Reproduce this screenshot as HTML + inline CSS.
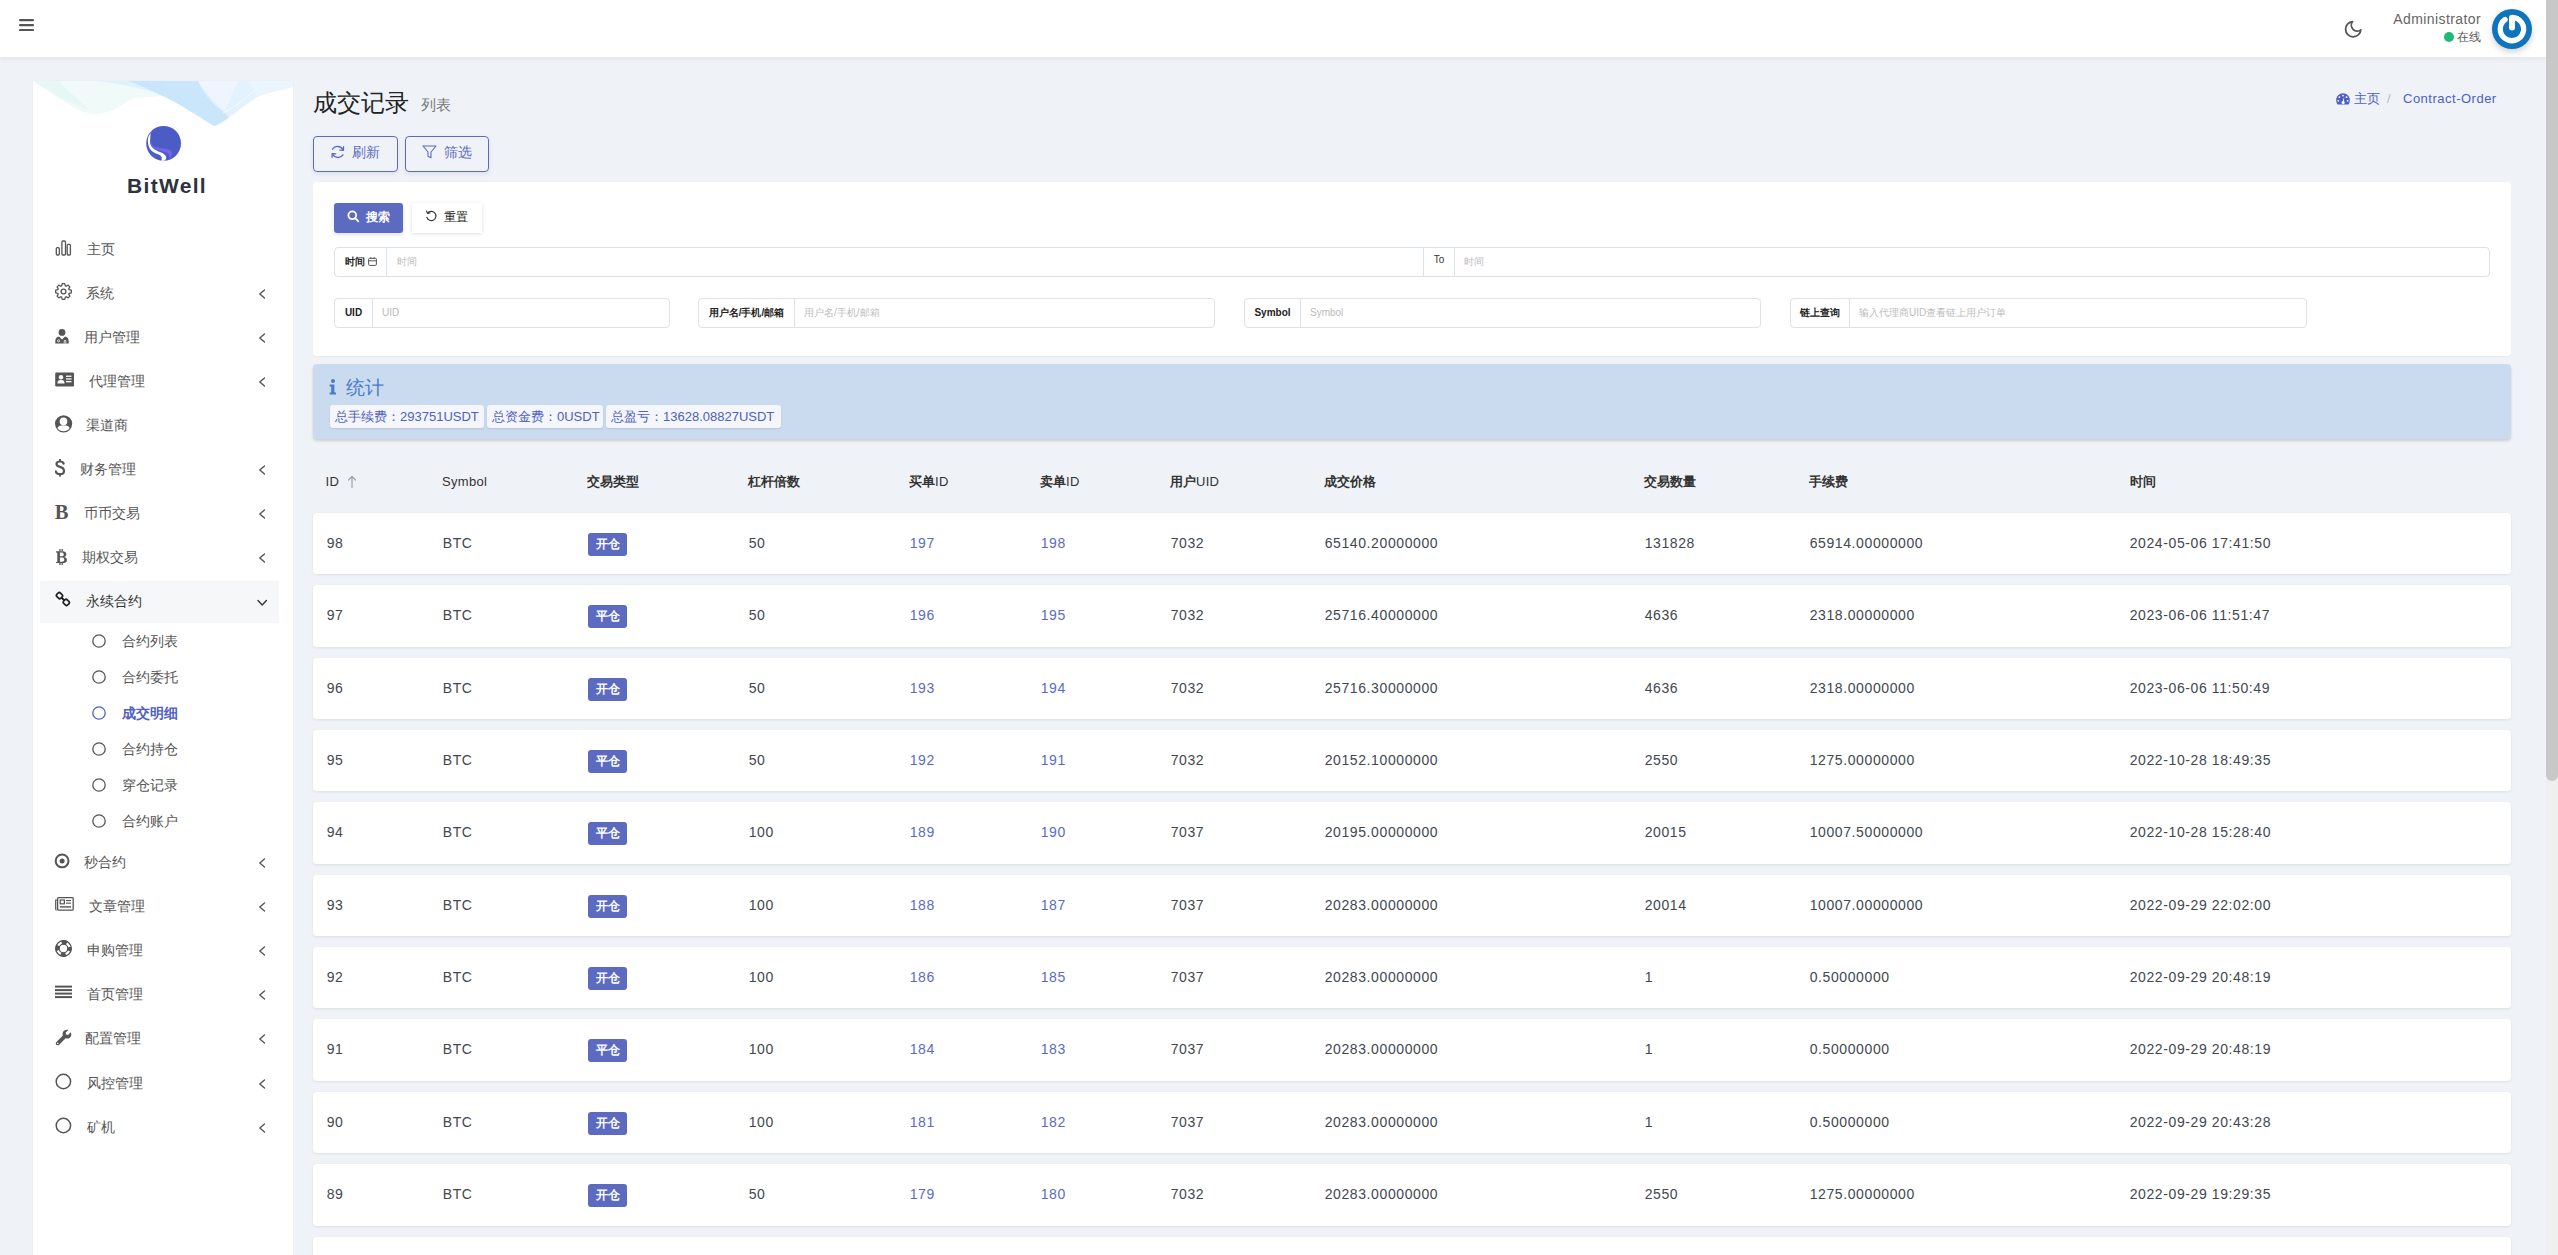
<!DOCTYPE html>
<html><head><meta charset="utf-8">
<style>
*{box-sizing:border-box}
html,body{margin:0;padding:0}
body{width:2558px;height:1255px;overflow:hidden;background:#eff2f7;font-family:"Liberation Sans",sans-serif;color:#414750;position:relative}
.a{position:absolute}
#hdr{left:0;top:0;width:2546px;height:57px;background:#fff;box-shadow:0 2px 5px rgba(0,0,0,.06)}
#sb-track{right:0;top:0;width:12px;height:1255px;background:#efefef}
#sb-thumb{right:0;top:0;width:12px;height:781px;background:#c8c8c8;border-radius:0 0 6px 6px}
#side{left:33px;top:81px;width:260px;height:1200px;background:#fff;box-shadow:0 0 3px rgba(0,0,0,.03)}
.mi{position:absolute;left:0;width:260px;height:20px;font-size:14px;line-height:20px;color:#4f4f4f}
.mi .t{position:absolute;top:0;white-space:nowrap}
.mi svg{position:absolute}
.mt{font-size:14px;line-height:20px;color:#555;white-space:nowrap}
.card{background:#fff;border-radius:4px}
.btn-o{border:1px solid #5c6bc0;border-radius:4px;color:#5c6bc0;font-size:14px;box-shadow:0 2px 4px rgba(0,0,0,.08)}
.ig{position:absolute;height:30px;border:1px solid #dce3e8;border-radius:4px;background:#fff}
.ig .lb{position:absolute;left:0;top:0;height:28px;border-right:1px solid #dce3e8;font-size:10px;font-weight:bold;color:#222;line-height:28px;text-align:center}
.ig .ph{position:absolute;top:0;height:28px;line-height:28px;font-size:10px;color:#bbb;white-space:nowrap}
.row{position:absolute;left:313px;width:2198px;height:61.4px;background:#fff;border-radius:4px;box-shadow:0 1px 3px rgba(0,0,0,.08)}
.row .c{position:absolute;top:20px;margin-left:.7px;line-height:21px;font-size:14px;letter-spacing:.6px;white-space:nowrap;color:#414750}
.row .lk{color:#5c6bc0}
.lbl{position:absolute;left:275px;top:20px;width:39px;height:23px;background:#5c6bc0;border-radius:3px;color:#fff;font-size:12px;font-weight:bold;text-align:center;line-height:23px}
.th{position:absolute;top:472px;line-height:20px;font-size:13px;color:#333;white-space:nowrap;letter-spacing:.3px}.th b{font-weight:bold;letter-spacing:0}
</style></head><body>
<div id="hdr" class="a">
 <svg class="a" style="left:19px;top:18px" width="15" height="13" viewBox="0 0 15 13"><rect x="0" y="1" width="15" height="2.2" rx="1" fill="#555"/><rect x="0" y="6" width="15" height="2.2" rx="1" fill="#555"/><rect x="0" y="11" width="15" height="2.2" rx="1" fill="#555"/></svg>
 <svg class="a" style="left:2343.1px;top:19.3px" width="20.4" height="20.4" viewBox="0 0 24 24"><path d="M21 12.79A9 9 0 1 1 11.21 3 7 7 0 0 0 21 12.79z" fill="none" stroke="#555" stroke-width="2.1" stroke-linecap="round" stroke-linejoin="round"/></svg>
 <div class="a" style="left:2393px;top:10px;width:88px;text-align:right;font-size:14px;line-height:18px;color:#666;letter-spacing:.4px;white-space:nowrap">Administrator</div>
 <div class="a" style="left:2444px;top:32px;width:10px;height:10px;border-radius:50%;background:#21b978"></div>
 <div class="a" style="left:2457px;top:29px;font-size:12px;line-height:16px;color:#555">在线</div>
 <div class="a" style="left:2492px;top:9px;width:40px;height:40px;border-radius:50%;background:#0e74bb;box-shadow:0 3px 6px rgba(0,0,0,.18)">
  <svg width="40" height="40" viewBox="0 0 40 40"><path d="M20 8.3 A11.7 11.7 0 1 1 13.1 10.5" fill="none" stroke="#fff" stroke-width="5.3" stroke-linecap="round"/><line x1="20" y1="9" x2="20" y2="18.5" stroke="#fff" stroke-width="6" stroke-linecap="round"/></svg>
 </div>
</div>
<div id="side" class="a"></div>
<svg class="a" style="left:33px;top:81px" width="260" height="50" viewBox="0 0 260 50">
<path d="M0 0 C20 14 40 28 56 32.6 C66 34 74 31.5 80 29 C90 24 96 19 102 17 L130 15 L130 0Z" fill="#e3f6f3" fill-opacity=".55"/>
<path d="M0 0 C15 9 35 22 56 29 C50 22 35 10 25 0Z" fill="#d8f3ee" fill-opacity=".35"/>
<path d="M65 0 L260 0 L260 6 C245 9 235 12 224 16 C205 28 195 40 181 45 C165 35 145 22 130 15 C115 8 90 3 65 0Z" fill="#dcefff" fill-opacity=".8"/>
<path d="M95 0 L165 0 C172 12 185 26 196 36 C190 41 185 44 181 45 C165 35 145 22 130 15 C118 9 105 3 95 0Z" fill="#b9def8" fill-opacity=".6"/>
<path d="M165 0 L205 0 C200 12 195 25 190 30 C180 25 170 12 165 0Z" fill="#ffffff" fill-opacity=".35"/>
<path d="M190 32 C205 25 215 15 224 7" fill="none" stroke="#fff" stroke-width="1" stroke-opacity=".7"/>
<path d="M224 16 C235 12 245 9 260 6 L260 0 L215 0Z" fill="#eef7fd" fill-opacity=".6"/>
</svg>
<svg class="a" style="left:145px;top:125px" width="38" height="38" viewBox="0 0 38 38">
<defs><clipPath id="lc"><circle cx="18.6" cy="18.4" r="17.4"/></clipPath></defs>
<circle cx="18.6" cy="18.4" r="17.4" fill="#4b5dc4"/>
<g clip-path="url(#lc)"><path d="M6.37 7.03 C5.98 7.70 3.91 10.21 3.35 12.05 C2.80 13.90 2.80 16.18 3.02 18.08 C3.24 19.98 3.69 21.87 4.69 23.43 C5.70 25.00 7.48 26.39 9.04 27.45 C10.60 28.51 12.84 29.07 14.06 29.79 C15.29 30.52 15.96 31.08 16.41 31.80 C16.85 32.53 16.80 33.45 16.74 34.14 C16.68 34.84 15.62 35.71 16.07 35.98 C16.52 36.26 18.58 36.29 19.42 35.82 C20.25 35.34 20.92 34.03 21.09 33.14 C21.26 32.25 21.04 31.30 20.42 30.46 C19.81 29.63 18.80 28.90 17.41 28.12 C16.02 27.34 13.73 26.72 12.05 25.78 C10.38 24.83 8.51 23.71 7.37 22.43 C6.23 21.15 5.47 20.48 5.19 18.08 C4.92 15.68 5.50 9.88 5.70 8.04 C5.89 6.20 6.76 6.37 6.37 7.03Z" fill="#fff"/><path d="M5.70 16.74 C5.92 16.68 6.81 19.75 8.04 20.76 C9.27 21.76 11.11 22.26 13.06 22.76 C15.01 23.27 17.80 23.43 19.75 23.77 C21.70 24.10 23.60 24.16 24.77 24.77 C25.94 25.39 26.45 26.56 26.78 27.45 C27.12 28.34 27.00 29.29 26.78 30.13 C26.56 30.96 25.89 31.91 25.44 32.47 C25.00 33.03 24.27 33.75 24.10 33.47 C23.94 33.20 24.77 31.69 24.44 30.80 C24.10 29.90 23.15 28.84 22.10 28.12 C21.04 27.39 19.75 27.06 18.08 26.45 C16.41 25.83 13.95 25.33 12.05 24.44 C10.16 23.55 7.76 22.37 6.70 21.09 C5.64 19.81 5.47 16.80 5.70 16.74Z" fill="#7563ee"/></g>
</svg>
<div class="a" style="left:117px;top:174px;width:100px;text-align:center;font-size:21px;font-weight:bold;line-height:24px;color:#2b3240;letter-spacing:1.3px">BitWell</div>
<svg class="a" style="left:55px;top:240px" width="17" height="16" viewBox="0 0 17 16"><rect x="1.3" y="7.6" width="3" height="7.4" rx="1" fill="none" stroke="#555" stroke-width="1.3"/><rect x="6.9" y="1" width="3.6" height="14" rx="1" fill="none" stroke="#555" stroke-width="1.3"/><rect x="12.2" y="4.3" width="3.2" height="10.7" rx="1" fill="none" stroke="#555" stroke-width="1.3"/></svg>
<div class="a mt" style="left:87px;top:239px;">主页</div>
<svg class="a" style="left:55px;top:283px" width="17" height="17" viewBox="0 0 17 17"><path d="M6.70 2.88 L7.24 0.70 L9.76 0.70 L10.30 2.88 L11.20 3.25 L13.12 2.10 L14.90 3.88 L13.75 5.80 L14.12 6.70 L16.30 7.24 L16.30 9.76 L14.12 10.30 L13.75 11.20 L14.90 13.12 L13.12 14.90 L11.20 13.75 L10.30 14.12 L9.76 16.30 L7.24 16.30 L6.70 14.12 L5.80 13.75 L3.88 14.90 L2.10 13.12 L3.25 11.20 L2.88 10.30 L0.70 9.76 L0.70 7.24 L2.88 6.70 L3.25 5.80 L2.10 3.88 L3.88 2.10 L5.80 3.25Z" fill="none" stroke="#555" stroke-width="1.3" stroke-linejoin="round"/><circle cx="8.5" cy="8.5" r="2.4" fill="none" stroke="#555" stroke-width="1.3"/></svg>
<div class="a mt" style="left:86px;top:283px;">系统</div>
<svg class="a" style="left:258px;top:289px" width="8" height="10" viewBox="0 0 8 10"><polyline points="6.5,1 1.8,5 6.5,9" fill="none" stroke="#555" stroke-width="1.4" stroke-linejoin="round" stroke-linecap="round"/></svg>
<svg class="a" style="left:55px;top:329px" width="14" height="15" viewBox="0 0 14 15"><circle cx="7" cy="3.4" r="3.4" fill="#555"/><path d="M0.3 14.5 L0.3 12 C0.3 9.3 2 8 4 7.6 L7 10.5 L10 7.6 C12 8 13.7 9.3 13.7 12 L13.7 14.5Z" fill="#555"/><circle cx="3.6" cy="11.8" r="1.1" fill="none" stroke="#fff" stroke-width=".8"/><path d="M9.2 14.5 V11.5 H10.8 V14.5" fill="none" stroke="#fff" stroke-width=".8"/></svg>
<div class="a mt" style="left:83.5px;top:327px;">用户管理</div>
<svg class="a" style="left:258px;top:333px" width="8" height="10" viewBox="0 0 8 10"><polyline points="6.5,1 1.8,5 6.5,9" fill="none" stroke="#555" stroke-width="1.4" stroke-linejoin="round" stroke-linecap="round"/></svg>
<svg class="a" style="left:55px;top:372px" width="19" height="15" viewBox="0 0 19 15"><rect x="0.2" y="0.4" width="18.8" height="14.2" rx="1.3" fill="#555"/><circle cx="6" cy="5.2" r="2.2" fill="#fff"/><path d="M2.5 11.5 C2.5 8.5 4 8 6 8 C8 8 9.5 8.5 9.5 11.5Z" fill="#fff"/><rect x="11" y="3.6" width="5.5" height="1.3" fill="#fff"/><rect x="11" y="6.3" width="5.5" height="1.3" fill="#fff"/><rect x="11" y="9" width="5.5" height="1.3" fill="#fff"/></svg>
<div class="a mt" style="left:89px;top:371px;">代理管理</div>
<svg class="a" style="left:258px;top:377px" width="8" height="10" viewBox="0 0 8 10"><polyline points="6.5,1 1.8,5 6.5,9" fill="none" stroke="#555" stroke-width="1.4" stroke-linejoin="round" stroke-linecap="round"/></svg>
<svg class="a" style="left:55px;top:415px" width="18" height="18" viewBox="0 0 18 18"><circle cx="8.6" cy="8.8" r="8.6" fill="#555"/><circle cx="8.5" cy="6.4" r="3.8" fill="#fff"/><path d="M2.3 13 C3.2 10.9 5.5 10.3 8.5 10.3 C11.5 10.3 13.8 10.9 14.7 13 C13.3 15.2 11 16.3 8.5 16.3 C6 16.3 3.7 15.2 2.3 13Z" fill="#fff"/></svg>
<div class="a mt" style="left:86.4px;top:415px;">渠道商</div>
<svg class="a" style="left:55px;top:459px" width="10" height="18" viewBox="0 0 10 18"><path d="M8.6 4.6 C8.2 3.3 7 2.5 5 2.5 C2.8 2.5 1.5 3.5 1.5 5 C1.5 6.6 2.8 7.3 5 7.9 C7.5 8.6 9 9.6 9 11.9 C9 13.9 7.3 15.2 5 15.2 C2.6 15.2 1.1 14.1 0.8 12.4" fill="none" stroke="#555" stroke-width="2.2" stroke-linecap="round"/><rect x="4.1" y="0" width="1.8" height="3" fill="#555"/><rect x="4.1" y="14.6" width="1.8" height="3" fill="#555"/></svg>
<div class="a mt" style="left:80px;top:459px;">财务管理</div>
<svg class="a" style="left:258px;top:465px" width="8" height="10" viewBox="0 0 8 10"><polyline points="6.5,1 1.8,5 6.5,9" fill="none" stroke="#555" stroke-width="1.4" stroke-linejoin="round" stroke-linecap="round"/></svg>
<div class="a" style="left:54.7px;top:501px;font-family:'Liberation Serif',serif;font-size:20.5px;font-weight:bold;line-height:22px;color:#555">B</div>
<div class="a mt" style="left:83.5px;top:503px;">币币交易</div>
<svg class="a" style="left:258px;top:509px" width="8" height="10" viewBox="0 0 8 10"><polyline points="6.5,1 1.8,5 6.5,9" fill="none" stroke="#555" stroke-width="1.4" stroke-linejoin="round" stroke-linecap="round"/></svg>
<svg class="a" style="left:55px;top:549px" width="13" height="16" viewBox="0 0 13 16"><path d="M1 2.3 H7.3 C10 2.3 11.3 3.5 11.3 5.4 C11.3 6.7 10.5 7.5 9.3 7.9 C10.9 8.3 12 9.3 12 10.9 C12 12.9 10.5 14.1 7.6 14.1 H1 V13 H2.3 V3.4 H1Z M4.9 3.6 V7.3 H6.8 C8.2 7.3 8.7 6.5 8.7 5.4 C8.7 4.3 8.1 3.6 6.8 3.6Z M4.9 8.5 V12.8 H7 C8.7 12.8 9.3 11.9 9.3 10.6 C9.3 9.3 8.6 8.5 7 8.5Z" fill="#555"/><rect x="4.3" y="0" width="1.3" height="2.5" fill="#555"/><rect x="6.6" y="0" width="1.3" height="2.5" fill="#555"/><rect x="4.3" y="13.8" width="1.3" height="2.2" fill="#555"/><rect x="6.6" y="13.8" width="1.3" height="2.2" fill="#555"/></svg>
<div class="a mt" style="left:81.5px;top:547px;">期权交易</div>
<svg class="a" style="left:258px;top:553px" width="8" height="10" viewBox="0 0 8 10"><polyline points="6.5,1 1.8,5 6.5,9" fill="none" stroke="#555" stroke-width="1.4" stroke-linejoin="round" stroke-linecap="round"/></svg>
<div class="a" style="left:40px;top:581px;width:239px;height:42px;background:#f6f7f9"></div>
<svg class="a" style="left:55px;top:591px" width="16" height="16" viewBox="0 0 16 16"><g fill="none" stroke="#222" stroke-width="1.7"><rect x="1.7" y="2.1" width="5.6" height="5" rx="1.7" transform="rotate(45 4.5 4.6)"/><rect x="8.5" y="8.9" width="5.6" height="5" rx="1.7" transform="rotate(45 11.3 11.4)"/><line x1="6.4" y1="6.5" x2="9.4" y2="9.5" stroke-width="2"/></g></svg>
<div class="a mt" style="left:85.5px;top:591px;color:#333">永续合约</div>
<svg class="a" style="left:257px;top:599px" width="11" height="8" viewBox="0 0 11 8"><polyline points="1,1.5 5.2,6 9.4,1.5" fill="none" stroke="#333" stroke-width="1.4" stroke-linejoin="round" stroke-linecap="round"/></svg>
<svg class="a" style="left:92px;top:634px" width="14" height="14" viewBox="0 0 14 14"><circle cx="7" cy="7" r="6.2" fill="none" stroke="#555" stroke-width="1.3"/></svg>
<div class="a mt" style="left:121.5px;top:631px;">合约列表</div>
<svg class="a" style="left:92px;top:670px" width="14" height="14" viewBox="0 0 14 14"><circle cx="7" cy="7" r="6.2" fill="none" stroke="#555" stroke-width="1.3"/></svg>
<div class="a mt" style="left:121.5px;top:667px;">合约委托</div>
<svg class="a" style="left:92px;top:706px" width="14" height="14" viewBox="0 0 14 14"><circle cx="7" cy="7" r="6.2" fill="none" stroke="#5061c4" stroke-width="1.3"/></svg>
<div class="a mt" style="left:121.5px;top:703px;color:#5061c4;font-weight:bold">成交明细</div>
<svg class="a" style="left:92px;top:742px" width="14" height="14" viewBox="0 0 14 14"><circle cx="7" cy="7" r="6.2" fill="none" stroke="#555" stroke-width="1.3"/></svg>
<div class="a mt" style="left:121.5px;top:739px;">合约持仓</div>
<svg class="a" style="left:92px;top:778px" width="14" height="14" viewBox="0 0 14 14"><circle cx="7" cy="7" r="6.2" fill="none" stroke="#555" stroke-width="1.3"/></svg>
<div class="a mt" style="left:121.5px;top:775px;">穿仓记录</div>
<svg class="a" style="left:92px;top:814px" width="14" height="14" viewBox="0 0 14 14"><circle cx="7" cy="7" r="6.2" fill="none" stroke="#555" stroke-width="1.3"/></svg>
<div class="a mt" style="left:121.5px;top:811px;">合约账户</div>
<svg class="a" style="left:54px;top:853px" width="16" height="16" viewBox="0 0 16 16"><circle cx="8.1" cy="7.9" r="6.4" fill="none" stroke="#555" stroke-width="2"/><circle cx="8.1" cy="7.9" r="2.5" fill="#555"/></svg>
<div class="a mt" style="left:83.5px;top:852px;">秒合约</div>
<svg class="a" style="left:258px;top:858px" width="8" height="10" viewBox="0 0 8 10"><polyline points="6.5,1 1.8,5 6.5,9" fill="none" stroke="#555" stroke-width="1.4" stroke-linejoin="round" stroke-linecap="round"/></svg>
<svg class="a" style="left:55px;top:897px" width="19" height="14" viewBox="0 0 19 14"><rect x="2.6" y="0.7" width="15.6" height="12.4" rx="0.8" fill="none" stroke="#555" stroke-width="1.3"/><path d="M2.6 3 H0.7 V12.3 C0.7 12.8 1.2 13.1 1.7 13.1" fill="none" stroke="#555" stroke-width="1.2"/><rect x="5.2" y="3" width="4.2" height="3.8" fill="none" stroke="#555" stroke-width="1.2"/><rect x="11" y="3" width="5" height="1.1" fill="#555"/><rect x="11" y="5.6" width="5" height="1.1" fill="#555"/><rect x="4.8" y="9.2" width="11.2" height="1.4" fill="#555"/></svg>
<div class="a mt" style="left:88.8px;top:896px;">文章管理</div>
<svg class="a" style="left:258px;top:902px" width="8" height="10" viewBox="0 0 8 10"><polyline points="6.5,1 1.8,5 6.5,9" fill="none" stroke="#555" stroke-width="1.4" stroke-linejoin="round" stroke-linecap="round"/></svg>
<svg class="a" style="left:55px;top:940px" width="17" height="17" viewBox="0 0 17 17"><circle cx="8.5" cy="8.5" r="6.2" fill="none" stroke="#555" stroke-width="4" stroke-dasharray="5.2 4.54" stroke-dashoffset="2.6"/><circle cx="8.5" cy="8.5" r="7.8" fill="none" stroke="#555" stroke-width="1.2"/><circle cx="8.5" cy="8.5" r="4.3" fill="none" stroke="#555" stroke-width="1.2"/></svg>
<div class="a mt" style="left:87.3px;top:940px;">申购管理</div>
<svg class="a" style="left:258px;top:946px" width="8" height="10" viewBox="0 0 8 10"><polyline points="6.5,1 1.8,5 6.5,9" fill="none" stroke="#555" stroke-width="1.4" stroke-linejoin="round" stroke-linecap="round"/></svg>
<svg class="a" style="left:55px;top:985px" width="17" height="14" viewBox="0 0 17 14"><rect x="0" y="0.6" width="17" height="2" fill="#555"/><rect x="0" y="4.1" width="17" height="2" fill="#555"/><rect x="0" y="7.6" width="17" height="2" fill="#555"/><rect x="0" y="11.1" width="17" height="2" fill="#555"/></svg>
<div class="a mt" style="left:86.7px;top:984px;">首页管理</div>
<svg class="a" style="left:258px;top:990px" width="8" height="10" viewBox="0 0 8 10"><polyline points="6.5,1 1.8,5 6.5,9" fill="none" stroke="#555" stroke-width="1.4" stroke-linejoin="round" stroke-linecap="round"/></svg>
<svg class="a" style="left:55px;top:1029px" width="17" height="17" viewBox="0 0 17 17"><path d="M15.8 3.2 L13 5.9 L11.1 5.5 L10.7 3.6 L13.4 0.9 C11.3 0.2 9.2 0.9 8.2 2.6 C7.5 3.8 7.4 5.2 7.9 6.5 L1.4 12.9 C0.6 13.7 0.6 14.9 1.4 15.7 C2.2 16.5 3.4 16.5 4.2 15.7 L10.6 9.2 C11.9 9.7 13.3 9.6 14.5 8.9 C16.2 7.9 16.9 5.5 15.8 3.2Z" fill="#555"/><circle cx="2.8" cy="14.3" r=".8" fill="#fff"/></svg>
<div class="a mt" style="left:85.4px;top:1028px;">配置管理</div>
<svg class="a" style="left:258px;top:1034px" width="8" height="10" viewBox="0 0 8 10"><polyline points="6.5,1 1.8,5 6.5,9" fill="none" stroke="#555" stroke-width="1.4" stroke-linejoin="round" stroke-linecap="round"/></svg>
<svg class="a" style="left:55px;top:1073px" width="17" height="17" viewBox="0 0 17 17"><circle cx="8.4" cy="8.5" r="7.2" fill="none" stroke="#555" stroke-width="1.5"/></svg>
<div class="a mt" style="left:86.7px;top:1073px;">风控管理</div>
<svg class="a" style="left:258px;top:1079px" width="8" height="10" viewBox="0 0 8 10"><polyline points="6.5,1 1.8,5 6.5,9" fill="none" stroke="#555" stroke-width="1.4" stroke-linejoin="round" stroke-linecap="round"/></svg>
<svg class="a" style="left:55px;top:1117px" width="17" height="17" viewBox="0 0 17 17"><circle cx="8.4" cy="8.5" r="7.2" fill="none" stroke="#555" stroke-width="1.5"/></svg>
<div class="a mt" style="left:86.7px;top:1117px;">矿机</div>
<svg class="a" style="left:258px;top:1123px" width="8" height="10" viewBox="0 0 8 10"><polyline points="6.5,1 1.8,5 6.5,9" fill="none" stroke="#555" stroke-width="1.4" stroke-linejoin="round" stroke-linecap="round"/></svg>
<div class="a" style="left:313px;top:87px;font-size:24px;line-height:32px;color:#222;white-space:nowrap">成交记录</div>
<div class="a" style="left:421px;top:95px;font-size:14.5px;line-height:20px;color:#777;white-space:nowrap">列表</div>
<svg class="a" style="left:2336px;top:93px" width="14" height="12" viewBox="0 0 14 12"><path d="M7 0.3 C3.2 0.3 0.2 3.4 0.2 7.2 C0.2 8.8 0.7 10.3 1.6 11.6 H12.4 C13.3 10.3 13.8 8.8 13.8 7.2 C13.8 3.4 10.8 0.3 7 0.3Z" fill="#4c5fc6"/><g fill="#fff"><circle cx="7" cy="2.6" r=".9"/><circle cx="3.4" cy="4.2" r=".9"/><circle cx="10.6" cy="4.2" r=".9"/><circle cx="2.3" cy="7.8" r=".9"/><circle cx="11.7" cy="7.8" r=".9"/><path d="M8.2 3.5 L7.9 8.2 C8.6 8.5 8.9 9.2 8.7 9.9 C8.4 10.8 7.5 11.2 6.7 10.9 C5.8 10.6 5.4 9.7 5.7 8.9 C5.9 8.4 6.3 8.1 6.8 8 Z"/></g></svg>
<div class="a" style="left:2354px;top:89px;font-size:13px;line-height:20px;color:#4c5fc6;white-space:nowrap">主页</div>
<div class="a" style="left:2387px;top:89px;font-size:13px;line-height:20px;color:#bbb;white-space:nowrap">/</div>
<div class="a" style="left:2403px;top:89px;font-size:13px;line-height:20px;color:#4c5fc6;letter-spacing:.5px;white-space:nowrap">Contract-Order</div>
<div class="a btn-o" style="left:313px;top:136px;width:85px;height:36px"></div>
<svg class="a" style="left:330px;top:145px" width="16" height="14" viewBox="0 0 16 14"><g fill="none" stroke="#5c6bc0" stroke-width="1.3" stroke-linecap="round" stroke-linejoin="round"><path d="M13.2 5.2 A6 6 0 0 0 2.6 4.2"/><polyline points="13.6,1.6 13.4,5.3 9.9,5.2"/><path d="M2.4 8.6 A6 6 0 0 0 13 9.8"/><polyline points="2,12.4 2.2,8.7 5.7,8.8"/></g></svg>
<div class="a" style="left:352px;top:142px;font-size:14px;line-height:20px;color:#5c6bc0">刷新</div>
<div class="a btn-o" style="left:405px;top:136px;width:84px;height:36px"></div>
<svg class="a" style="left:422px;top:145px" width="15" height="14" viewBox="0 0 15 14"><path d="M1 1 H14 L9 7 V12.8 L6 11.2 V7Z" fill="none" stroke="#5c6bc0" stroke-width="1.1" stroke-linejoin="round"/></svg>
<div class="a" style="left:444px;top:142px;font-size:14px;line-height:20px;color:#5c6bc0">筛选</div>
<div class="a card" style="left:313px;top:182px;width:2198px;height:174px;box-shadow:0 1px 2px rgba(0,0,0,.03)"></div>
<div class="a" style="left:334px;top:203px;width:69px;height:30px;background:#5c6bc0;border-radius:3px;box-shadow:0 2px 4px rgba(0,0,0,.12)"></div>
<svg class="a" style="left:347px;top:210px" width="13" height="13" viewBox="0 0 13 13"><circle cx="5.3" cy="5.3" r="3.9" fill="none" stroke="#fff" stroke-width="1.8"/><line x1="8.2" y1="8.2" x2="11.3" y2="11.3" stroke="#fff" stroke-width="1.8" stroke-linecap="round"/></svg>
<div class="a" style="left:366px;top:207px;font-size:12px;line-height:20px;color:#fff;font-weight:bold">搜索</div>
<div class="a" style="left:412px;top:203px;width:70px;height:30px;background:#fff;box-shadow:0 1px 4px rgba(0,0,0,.13)"></div>
<svg class="a" style="left:425px;top:210px" width="13" height="13" viewBox="0 0 13 13"><path d="M2.6 3.2 A4.6 4.6 0 1 1 1.9 7.4" fill="none" stroke="#333" stroke-width="1.2" stroke-linecap="round"/><polyline points="1.6,1.1 2.5,3.4 4.9,3" fill="none" stroke="#333" stroke-width="1.2" stroke-linecap="round" stroke-linejoin="round"/></svg>
<div class="a" style="left:444px;top:207px;font-size:12px;line-height:20px;color:#222;font-weight:500">重置</div>
<div class="ig" style="left:334px;top:247px;width:2156px">
 <div class="lb" style="width:52px;text-align:left;padding-left:10px">时间 <svg width="9" height="9" viewBox="0 0 9 9" style="vertical-align:-1px"><rect x=".6" y="1.3" width="7.8" height="7.1" rx="1" fill="none" stroke="#555" stroke-width="1"/><line x1=".6" y1="3.8" x2="8.4" y2="3.8" stroke="#555" stroke-width="1"/><line x1="2.8" y1=".2" x2="2.8" y2="2" stroke="#555"/><line x1="6.2" y1=".2" x2="6.2" y2="2" stroke="#555"/></svg></div>
 <div class="ph" style="left:62px">时间</div>
 <div class="a" style="left:1088px;top:0;width:32px;height:28px;border-left:1px solid #dce3e8;border-right:1px solid #dce3e8;font-size:10px;line-height:24px;text-align:center;color:#333">To</div>
 <div class="ph" style="left:1129px">时间</div>
</div>
<div class="ig" style="left:334px;top:298px;width:336px"><div class="lb" style="width:38px">UID</div><div class="ph" style="left:47px">UID</div></div>
<div class="ig" style="left:698px;top:298px;width:517px"><div class="lb" style="width:96px">用户名/手机/邮箱</div><div class="ph" style="left:105px">用户名/手机/邮箱</div></div>
<div class="ig" style="left:1244px;top:298px;width:517px"><div class="lb" style="width:56px">Symbol</div><div class="ph" style="left:65px">Symbol</div></div>
<div class="ig" style="left:1790px;top:298px;width:517px"><div class="lb" style="width:59px">链上查询</div><div class="ph" style="left:68px">输入代理商UID查看链上用户订单</div></div>
<div class="a" style="left:313px;top:364px;width:2198px;height:75px;background:#cbdbef;border-radius:4px;box-shadow:0 2px 3px rgba(0,0,0,.15)"></div>
<svg class="a" style="left:329px;top:379px" width="8" height="16" viewBox="0 0 8 16"><circle cx="4" cy="2" r="2" fill="#4a7bc8"/><path d="M0.6 5.5 H5.4 V13.5 H7 V15.5 H0.6 V13.5 H2.2 V7.5 H0.6Z" fill="#4a7bc8"/></svg>
<div class="a" style="left:346px;top:375px;font-size:18.5px;line-height:26px;color:#4a7bc8">统计</div>
<div class="a" style="left:330px;top:405px;width:154px;height:23px;background:#f4f6fb;border-radius:3px;box-shadow:0 1px 2px rgba(0,0,0,.1);font-size:13px;line-height:23px;color:#4d5fc0;white-space:nowrap;padding-left:5px">总手续费：293751USDT</div>
<div class="a" style="left:487px;top:405px;width:116px;height:23px;background:#f4f6fb;border-radius:3px;box-shadow:0 1px 2px rgba(0,0,0,.1);font-size:13px;line-height:23px;color:#4d5fc0;white-space:nowrap;padding-left:5px">总资金费：0USDT</div>
<div class="a" style="left:606px;top:405px;width:175px;height:23px;background:#f4f6fb;border-radius:3px;box-shadow:0 1px 2px rgba(0,0,0,.1);font-size:13px;line-height:23px;color:#4d5fc0;white-space:nowrap;padding-left:5px">总盈亏：13628.08827USDT</div>
<div class="th" style="left:325.5px">ID</div>
<div class="th" style="left:442px">Symbol</div>
<div class="th" style="left:587px"><b>交易类型</b></div>
<div class="th" style="left:748px"><b>杠杆倍数</b></div>
<div class="th" style="left:909px"><b>买单</b>ID</div>
<div class="th" style="left:1040px"><b>卖单</b>ID</div>
<div class="th" style="left:1170px"><b>用户</b>UID</div>
<div class="th" style="left:1324px"><b>成交价格</b></div>
<div class="th" style="left:1644px"><b>交易数量</b></div>
<div class="th" style="left:1809px"><b>手续费</b></div>
<div class="th" style="left:2129.5px"><b>时间</b></div>
<svg class="a" style="left:347px;top:475px" width="10" height="14" viewBox="0 0 10 14"><path d="M5 12.5 V1.5 M1.5 5 L5 1.5 L8.5 5" fill="none" stroke="#9aa3b5" stroke-width="1.2" stroke-linecap="round" stroke-linejoin="round"/></svg>
<div class="row" style="top:513.00px"><div class="c" style="left:13px">98</div><div class="c" style="left:129px">BTC</div><div class="lbl">开仓</div><div class="c" style="left:435px">50</div><div class="c lk" style="left:596px">197</div><div class="c lk" style="left:727px">198</div><div class="c" style="left:857px">7032</div><div class="c" style="left:1011px">65140.20000000</div><div class="c" style="left:1331px">131828</div><div class="c" style="left:1496px">65914.00000000</div><div class="c" style="left:1816px">2024-05-06 17:41:50</div></div>
<div class="row" style="top:585.35px"><div class="c" style="left:13px">97</div><div class="c" style="left:129px">BTC</div><div class="lbl">平仓</div><div class="c" style="left:435px">50</div><div class="c lk" style="left:596px">196</div><div class="c lk" style="left:727px">195</div><div class="c" style="left:857px">7032</div><div class="c" style="left:1011px">25716.40000000</div><div class="c" style="left:1331px">4636</div><div class="c" style="left:1496px">2318.00000000</div><div class="c" style="left:1816px">2023-06-06 11:51:47</div></div>
<div class="row" style="top:657.70px"><div class="c" style="left:13px">96</div><div class="c" style="left:129px">BTC</div><div class="lbl">开仓</div><div class="c" style="left:435px">50</div><div class="c lk" style="left:596px">193</div><div class="c lk" style="left:727px">194</div><div class="c" style="left:857px">7032</div><div class="c" style="left:1011px">25716.30000000</div><div class="c" style="left:1331px">4636</div><div class="c" style="left:1496px">2318.00000000</div><div class="c" style="left:1816px">2023-06-06 11:50:49</div></div>
<div class="row" style="top:730.05px"><div class="c" style="left:13px">95</div><div class="c" style="left:129px">BTC</div><div class="lbl">平仓</div><div class="c" style="left:435px">50</div><div class="c lk" style="left:596px">192</div><div class="c lk" style="left:727px">191</div><div class="c" style="left:857px">7032</div><div class="c" style="left:1011px">20152.10000000</div><div class="c" style="left:1331px">2550</div><div class="c" style="left:1496px">1275.00000000</div><div class="c" style="left:1816px">2022-10-28 18:49:35</div></div>
<div class="row" style="top:802.40px"><div class="c" style="left:13px">94</div><div class="c" style="left:129px">BTC</div><div class="lbl">平仓</div><div class="c" style="left:435px">100</div><div class="c lk" style="left:596px">189</div><div class="c lk" style="left:727px">190</div><div class="c" style="left:857px">7037</div><div class="c" style="left:1011px">20195.00000000</div><div class="c" style="left:1331px">20015</div><div class="c" style="left:1496px">10007.50000000</div><div class="c" style="left:1816px">2022-10-28 15:28:40</div></div>
<div class="row" style="top:874.75px"><div class="c" style="left:13px">93</div><div class="c" style="left:129px">BTC</div><div class="lbl">开仓</div><div class="c" style="left:435px">100</div><div class="c lk" style="left:596px">188</div><div class="c lk" style="left:727px">187</div><div class="c" style="left:857px">7037</div><div class="c" style="left:1011px">20283.00000000</div><div class="c" style="left:1331px">20014</div><div class="c" style="left:1496px">10007.00000000</div><div class="c" style="left:1816px">2022-09-29 22:02:00</div></div>
<div class="row" style="top:947.10px"><div class="c" style="left:13px">92</div><div class="c" style="left:129px">BTC</div><div class="lbl">开仓</div><div class="c" style="left:435px">100</div><div class="c lk" style="left:596px">186</div><div class="c lk" style="left:727px">185</div><div class="c" style="left:857px">7037</div><div class="c" style="left:1011px">20283.00000000</div><div class="c" style="left:1331px">1</div><div class="c" style="left:1496px">0.50000000</div><div class="c" style="left:1816px">2022-09-29 20:48:19</div></div>
<div class="row" style="top:1019.45px"><div class="c" style="left:13px">91</div><div class="c" style="left:129px">BTC</div><div class="lbl">平仓</div><div class="c" style="left:435px">100</div><div class="c lk" style="left:596px">184</div><div class="c lk" style="left:727px">183</div><div class="c" style="left:857px">7037</div><div class="c" style="left:1011px">20283.00000000</div><div class="c" style="left:1331px">1</div><div class="c" style="left:1496px">0.50000000</div><div class="c" style="left:1816px">2022-09-29 20:48:19</div></div>
<div class="row" style="top:1091.80px"><div class="c" style="left:13px">90</div><div class="c" style="left:129px">BTC</div><div class="lbl">开仓</div><div class="c" style="left:435px">100</div><div class="c lk" style="left:596px">181</div><div class="c lk" style="left:727px">182</div><div class="c" style="left:857px">7037</div><div class="c" style="left:1011px">20283.00000000</div><div class="c" style="left:1331px">1</div><div class="c" style="left:1496px">0.50000000</div><div class="c" style="left:1816px">2022-09-29 20:43:28</div></div>
<div class="row" style="top:1164.15px"><div class="c" style="left:13px">89</div><div class="c" style="left:129px">BTC</div><div class="lbl">开仓</div><div class="c" style="left:435px">50</div><div class="c lk" style="left:596px">179</div><div class="c lk" style="left:727px">180</div><div class="c" style="left:857px">7032</div><div class="c" style="left:1011px">20283.00000000</div><div class="c" style="left:1331px">2550</div><div class="c" style="left:1496px">1275.00000000</div><div class="c" style="left:1816px">2022-09-29 19:29:35</div></div>
<div class="row" style="top:1236.50px"><div class="c" style="left:13px">88</div><div class="c" style="left:129px">BTC</div><div class="lbl">开仓</div><div class="c" style="left:435px">50</div><div class="c lk" style="left:596px">177</div><div class="c lk" style="left:727px">178</div><div class="c" style="left:857px">7032</div><div class="c" style="left:1011px">20283.00000000</div><div class="c" style="left:1331px">2550</div><div class="c" style="left:1496px">1275.00000000</div><div class="c" style="left:1816px">2022-09-29 19:29:35</div></div>
<div id="sb-track" class="a"></div>
<div id="sb-thumb" class="a"></div>
</body></html>
